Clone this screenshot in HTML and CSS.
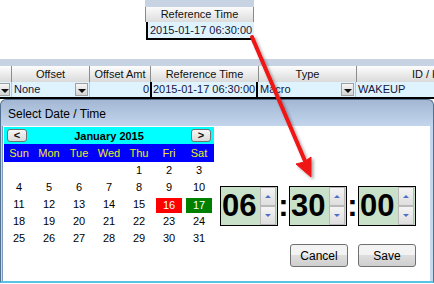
FILE: index.html
```html
<!DOCTYPE html>
<html lang="en">
<head>
    <meta charset="UTF-8">
    <title>Select Date / Time</title>
    <link rel="stylesheet" href="styles.css">
</head>
<body>
<div class="page">

    <div class="mini">
        <div class="band"></div>
        <div class="hcell">Reference Time</div>
        <div class="vcell">2015-01-17 06:30:00</div>
    </div>

    <div class="grid">
        <div class="band"></div>
        <div class="row head">
            <div class="c c0"></div>
            <div class="c c1">Offset</div>
            <div class="c c2">Offset Amt</div>
            <div class="c c3">Reference Time</div>
            <div class="c c4">Type</div>
            <div class="c c5">ID / Key</div>
        </div>
        <div class="row data">
            <div class="c c0"><span class="drop"></span></div>
            <div class="c c1"><span class="txt">None</span><span class="drop"></span></div>
            <div class="c c2 num">0</div>
            <div class="c c3 sel">2015-01-17 06:30:00</div>
            <div class="c c4"><span class="txt">Macro</span><span class="drop"></span></div>
            <div class="c c5">WAKEUP</div>
        </div>
    </div>

    <div class="dialog">
        <div class="dialog-title">Select Date / Time</div>
        <div class="dialog-body">

            <div class="cal">
                <div class="cal-head">
                    <span class="navbtn">&lt;</span>
                    <span class="month">January 2015</span>
                    <span class="navbtn">&gt;</span>
                </div>
                <div class="days">
                    <span>Sun</span><span>Mon</span><span>Tue</span><span>Wed</span><span>Thu</span><span>Fri</span><span>Sat</span>
                </div>
                <div class="dates">
                    <span></span><span></span><span></span><span></span>
                    <span>1</span><span>2</span><span>3</span>
                    <span>4</span><span>5</span><span>6</span><span>7</span><span>8</span><span>9</span><span>10</span>
                    <span>11</span><span>12</span><span>13</span><span>14</span><span>15</span>
                    <span><b class="mark today">16</b></span><span><b class="mark picked">17</b></span>
                    <span>18</span><span>19</span><span>20</span><span>21</span><span>22</span><span>23</span><span>24</span>
                    <span>25</span><span>26</span><span>27</span><span>28</span><span>29</span><span>30</span><span>31</span>
                </div>
            </div>

            <div class="timeside">
                <div class="time">
                    <div class="spin">
                        <span class="val">06</span>
                        <span class="arrows"><i class="up"></i><i class="down"></i></span>
                    </div>
                    <span class="colon">:</span>
                    <div class="spin">
                        <span class="val">30</span>
                        <span class="arrows"><i class="up"></i><i class="down"></i></span>
                    </div>
                    <span class="colon">:</span>
                    <div class="spin">
                        <span class="val">00</span>
                        <span class="arrows"><i class="up"></i><i class="down"></i></span>
                    </div>
                </div>
                <div class="actions">
                    <button class="btn">Cancel</button>
                    <button class="btn">Save</button>
                </div>
            </div>

        </div>
    </div>

    <svg class="arrow" width="434" height="284" viewBox="0 0 434 284">
        <defs>
            <filter id="shadow" x="-20%" y="-20%" width="140%" height="140%">
                <feDropShadow dx="2" dy="2" stdDeviation="1.5" flood-color="#000" flood-opacity="0.35"/>
            </filter>
        </defs>
        <g filter="url(#shadow)" fill="#f01414" stroke="#f01414">
            <line x1="252" y1="37" x2="305" y2="161" stroke-width="4" stroke-linecap="round"/>
            <polygon points="311,177 296,164 304,162 311,157" stroke-width="1" stroke-linejoin="round"/>
        </g>
    </svg>

</div>
</body>
</html>
```

FILE: styles.css
```css
html, body {
    margin: 0;
    padding: 0;
    background: #fff;
}

.page {
    position: relative;
    width: 434px;
    height: 284px;
    overflow: hidden;
    font-family: "Liberation Sans", Arial, sans-serif;
    font-size: 11px;
    color: #111;
}

.band {
    height: 7px;
    background: #c7d3e3;
}

/* small copy of the column on top */
.mini {
    margin-left: 145px;
    width: 109px;
}
.hcell {
    height: 15px;
    line-height: 15px;
    text-align: center;
    background: linear-gradient(#fbfbfb, #dcdcdc);
    border-left: 1px solid #8a8a8a;
    border-right: 1px solid #8a8a8a;
    box-sizing: border-box;
}
.vcell {
    height: 16px;
    line-height: 16px;
    margin-left: 1px;
    padding-left: 2px;
    background: #def3fd;
    border-left: 2px solid #000;
    border-bottom: 2px solid #000;
    color: #14143c;
}

/* grid */
.grid {
    margin-top: 19px;
}
.row {
    display: flex;
}
.row.head {
    height: 16px;
    line-height: 16px;
}
.row.head .c {
    background: linear-gradient(#fdfdfd, #dadada);
    border-right: 1px solid #8c8c8c;
    text-align: center;
}
.row.data {
    height: 15px;
    line-height: 15px;
    background: #def3fd;
    border-bottom: 2px solid #000;
    color: #14143c;
}
.row.data .c {
    border-right: 1px solid #b8c8d4;
}
.c {
    box-sizing: border-box;
    flex: none;
    white-space: nowrap;
    overflow: hidden;
    display: flex;
    align-items: center;
    justify-content: center;
}
.row.data .c {
    justify-content: flex-start;
    padding-left: 2px;
}
.c0 { width: 12px; }
.c1 { width: 78px; }
.c2 { width: 61px; }
.c3 { width: 108px; }
.c4 { width: 98px; }
.c5 { width: 150px; }

.row.data .c0 { padding-left: 0; }
.row.data .num {
    justify-content: flex-end;
    padding-right: 1px;
}
.row.data .sel {
    border-left: 2px solid #000;
    border-right: 2px solid #000;
    margin-left: -1px;
    padding-left: 1px;
}
.txt {
    flex: 1;
}
.drop {
    width: 13px;
    height: 13px;
    flex: none;
    box-sizing: border-box;
    margin-right: 1px;
    background: linear-gradient(#f6f6f6, #d4d4d4);
    border: 1px solid #a0a0a0;
    display: flex;
    align-items: center;
    justify-content: center;
}
.c0 .drop {
    width: 10px;
    margin-right: 0;
    border-left: none;
}
.drop::after {
    content: "";
    border-left: 4px solid transparent;
    border-right: 4px solid transparent;
    border-top: 4px solid #111;
    margin-top: 2px;
}

/* dialog */
.dialog {
    height: 184px;
    box-sizing: border-box;
    border: 1px solid #54708f;
    border-bottom: 2px solid #59c3e8;
    border-radius: 6px 6px 0 0;
    background: linear-gradient(#a3b7d4, #c3d5ec 26px, #c6dbef);
    padding: 0 3px 0 2px;
    display: flex;
    flex-direction: column;
}
.dialog-title {
    height: 26px;
    line-height: 28px;
    padding-left: 5px;
    font-size: 12px;
    color: #000;
}
.dialog-body {
    flex: 1;
    background: #fff;
    display: flex;
    padding: 1px 0 0 1px;
    border-left: 1px solid #7c98bc;
    margin-left: -1px;
}

/* calendar */
.cal {
    width: 210px;
}
.cal-head {
    height: 17px;
    background: #00ffff;
    display: flex;
    align-items: center;
    justify-content: space-between;
    padding: 0 3px;
}
.navbtn {
    width: 20px;
    height: 13px;
    box-sizing: border-box;
    border: 1px solid #707070;
    border-radius: 3px;
    background: linear-gradient(#f6f6f6, #dadada);
    font-size: 11px;
    font-weight: bold;
    line-height: 10px;
    text-align: center;
}
.month {
    font-weight: bold;
    color: #000;
}
.days {
    display: grid;
    grid-template-columns: repeat(7, 30px);
    height: 18px;
    line-height: 18px;
    background: #0000ff;
    color: #ecec1a;
    text-align: center;
}
.dates {
    display: grid;
    grid-template-columns: repeat(7, 30px);
    grid-auto-rows: 17px;
    text-align: center;
    line-height: 17px;
    color: #000;
}
.mark {
    display: block;
    margin: 2px 2px 0;
    height: 15px;
    line-height: 14px;
    font-weight: normal;
    color: #fff;
}
.today { background: #ff0000; }
.picked { background: #008000; }

/* time side */
.timeside {
    margin: 59px 0 0 6px;
    width: 196px;
}
.time {
    display: flex;
    align-items: center;
}
.spin {
    width: 58px;
    height: 40px;
    box-sizing: border-box;
    border: 1px solid #000;
    background: #c9e1c9;
    display: flex;
    padding: 0 0 0 1px;
}
.val {
    flex: 1;
    font-size: 31px;
    font-weight: bold;
    line-height: 38px;
    color: #000;
}
.arrows {
    width: 16px;
    display: flex;
    flex-direction: column;
    margin: 0 1px 0 0;
}
.arrows i {
    flex: 1;
    box-sizing: border-box;
    border: 1px solid #b9b9b9;
    background: linear-gradient(#f4f4f4, #dedede);
    display: flex;
    align-items: center;
    justify-content: center;
}
.arrows .up::after {
    content: "";
    border-left: 3px solid transparent;
    border-right: 3px solid transparent;
    border-bottom: 3px solid #4d6fc4;
}
.arrows .down::after {
    content: "";
    border-left: 3px solid transparent;
    border-right: 3px solid transparent;
    border-top: 3px solid #4d6fc4;
}
.colon {
    width: 11px;
    text-align: center;
    font-size: 31px;
    font-weight: bold;
    line-height: 38px;
    color: #000;
}

.actions {
    display: flex;
    justify-content: flex-end;
    gap: 10px;
    margin-top: 18px;
}
.btn {
    width: 58px;
    height: 23px;
    border: 1px solid #707070;
    border-radius: 3px;
    background: linear-gradient(#f3f3f3 45%, #dddddd 50%, #cfcfcf);
    font-family: "Liberation Sans", Arial, sans-serif;
    font-size: 12px;
    color: #000;
    padding: 0;
}

.arrow {
    position: absolute;
    left: 0;
    top: 0;
    pointer-events: none;
}
```
